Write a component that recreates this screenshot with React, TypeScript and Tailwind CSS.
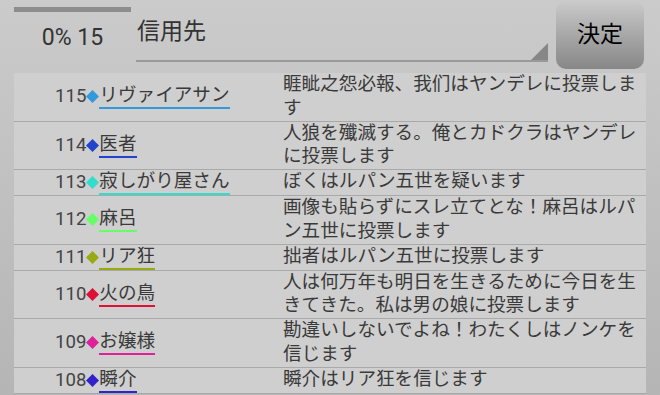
import React from "react";

type Vote = {
  no: number;
  name: string;
  color: string;
  line: string;
  text: string;
};

const votes: Vote[] = [
  { no: 115, name: "リヴァイアサン", color: "#3399dd", line: "border-[#3399dd]", text: "睚眦之怨必報、我们はヤンデレに投票します" },
  { no: 114, name: "医者", color: "#2244cc", line: "border-[#2244cc]", text: "人狼を殲滅する。俺とカドクラはヤンデレに投票します" },
  { no: 113, name: "寂しがり屋さん", color: "#33ddcc", line: "border-[#33ddcc]", text: "ぼくはルパン五世を疑います" },
  { no: 112, name: "麻呂", color: "#66ff66", line: "border-[#66ff66]", text: "画像も貼らずにスレ立てとな！麻呂はルパン五世に投票します" },
  { no: 111, name: "リア狂", color: "#99aa11", line: "border-[#99aa11]", text: "拙者はルパン五世に投票します" },
  { no: 110, name: "火の鳥", color: "#dd1133", line: "border-[#dd1133]", text: "人は何万年も明日を生きるために今日を生きてきた。私は男の娘に投票します" },
  { no: 109, name: "お嬢様", color: "#dd2299", line: "border-[#dd2299]", text: "勘違いしないでよね！わたくしはノンケを信じます" },
  { no: 108, name: "瞬介", color: "#3322cc", line: "border-[#3322cc]", text: "瞬介はリア狂を信じます" },
];

function Diamond({ color }: { color: string }) {
  return (
    <svg width="13" height="13" viewBox="0 0 13 13" className="shrink-0">
      <polygon points="6.5,0 13,6.5 6.5,13 0,6.5" fill={color} />
    </svg>
  );
}

export default function App() {
  return (
    <div className="h-[395px] w-[660px] overflow-hidden bg-linear-to-b from-[#cbcbcb] to-[#b5b5b5] font-['Roboto','Noto_Sans_CJK_JP',sans-serif] text-[#3a3a3a]">
      {/* header */}
      <div className="flex h-[73px] items-start pl-[14px]">
        <div className="flex w-[117px] flex-col">
          <div className="mt-[7px] h-[5px] bg-[#8d8d8d]" />
          <div className="mt-[12px] text-center text-[23px] leading-[28px] text-[#333]">0% 15</div>
        </div>
        <div className="ml-[5px] flex h-[62px] w-[412px] border-b-2 border-[#999]">
          <div className="flex-1 pl-[1px] pt-[17px] text-[23px] leading-[30px] text-[#333]">信用先</div>
          <svg width="17" height="17" viewBox="0 0 17 17" className="self-end">
            <polygon points="17,0 17,17 0,17" fill="#878787" />
          </svg>
        </div>
        <button className="ml-[8px] mt-[1px] flex h-[68px] w-[88px] items-center justify-center rounded-[10px] bg-linear-to-b from-[#cacaca] to-[#878787] text-[23px] text-black">
          決定
        </button>
      </div>

      {/* vote list */}
      <div className="mx-[14px] bg-[#cfcfcf]">
        {votes.map((v) => (
          <div key={v.no} className="flex border-b border-[#a9a9a9]">
            <div className="flex w-[269px] shrink-0 items-center pl-[41px] text-[18.6px]">
              <span className="leading-[23px] text-[#444]">{v.no}</span>
              <Diamond color={v.color} />
              <span className={`border-b-2 leading-[23px] ${v.line}`}>{v.name}</span>
            </div>
            <div className="flex-1 pr-[8px] text-[18.6px] leading-[23.75px]">{v.text}</div>
          </div>
        ))}
      </div>
    </div>
  );
}
